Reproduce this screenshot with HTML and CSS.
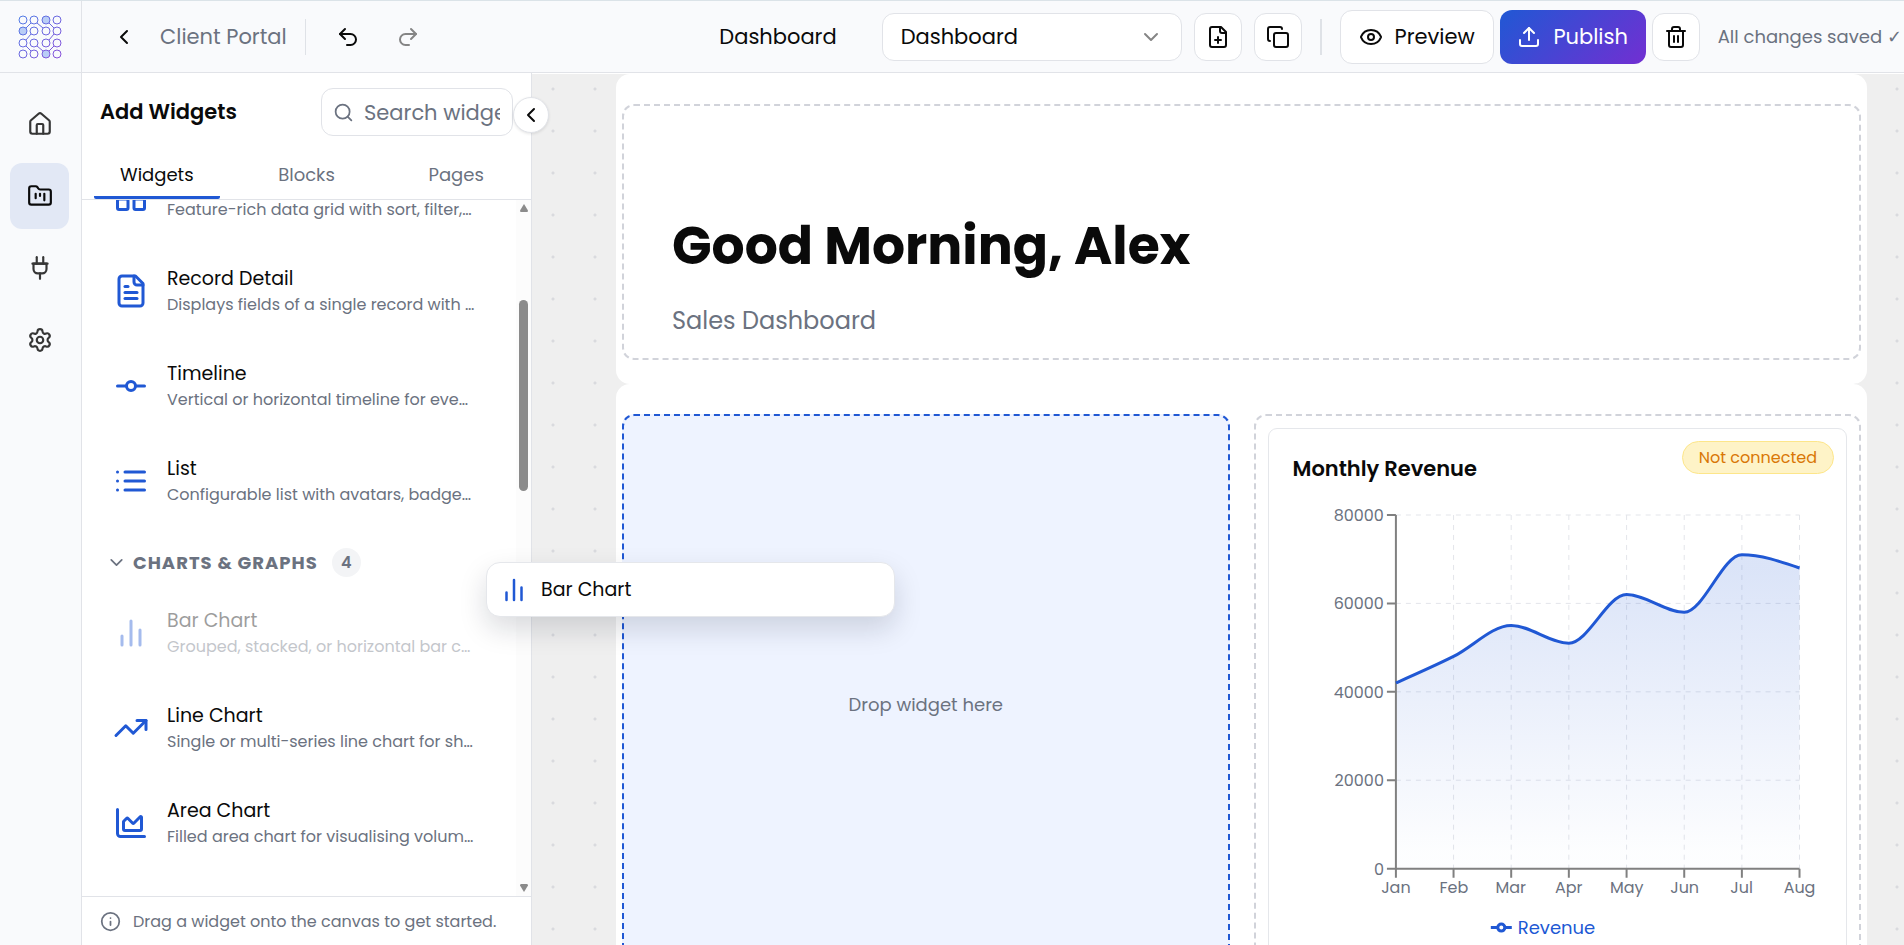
FILE: index.html
```html
<!DOCTYPE html>
<html lang="en">
<head>
<meta charset="utf-8">
<title>Client Portal – Dashboard</title>
<link rel="stylesheet" href="styles.css">
</head>
<body>
<svg class="sprite" aria-hidden="true">
  <defs>
    <symbol id="i-left" viewBox="0 0 24 24"><path d="m15 18-6-6 6-6"/></symbol>
    <symbol id="i-down" viewBox="0 0 24 24"><path d="m6 9 6 6 6-6"/></symbol>
    <symbol id="i-undo" viewBox="0 0 24 24"><path d="M9 14 4 9l5-5"/><path d="M4 9h10.5a5.5 5.5 0 0 1 0 11H11"/></symbol>
    <symbol id="i-redo" viewBox="0 0 24 24"><path d="m15 14 5-5-5-5"/><path d="M20 9H9.5a5.5 5.5 0 0 0 0 11H13"/></symbol>
    <symbol id="i-search" viewBox="0 0 24 24"><circle cx="11" cy="11" r="8"/><path d="m21 21-4.3-4.3"/></symbol>
    <symbol id="i-home" viewBox="0 0 24 24"><path d="M15 21v-8a1 1 0 0 0-1-1h-4a1 1 0 0 0-1 1v8"/><path d="M3 10a2 2 0 0 1 .7-1.5l7-6a2 2 0 0 1 2.6 0l7 6A2 2 0 0 1 21 10v9a2 2 0 0 1-2 2H5a2 2 0 0 1-2-2z"/></symbol>
    <symbol id="i-folder" viewBox="0 0 24 24"><path d="M4 20h16a2 2 0 0 0 2-2V8a2 2 0 0 0-2-2h-7.9a2 2 0 0 1-1.7-.9l-.8-1.2A2 2 0 0 0 7.9 3H4a2 2 0 0 0-2 2v13c0 1.100.9 2 2 2Z"/><path d="M8 10v4"/><path d="M12 10v2"/><path d="M16 10v6"/></symbol>
    <symbol id="i-plug" viewBox="0 0 24 24"><path d="M12 22v-5"/><path d="M9 8V2"/><path d="M15 8V2"/><path d="M18 8v5a4 4 0 0 1-4 4h-4a4 4 0 0 1-4-4V8Z"/><path d="M5 8h14"/></symbol>
    <symbol id="i-gear" viewBox="0 0 24 24"><path d="M9.671 4.136a2.340 2.340 0 0 1 4.659 0 2.340 2.340 0 0 0 3.319 1.915 2.340 2.340 0 0 1 2.330 4.033 2.340 2.340 0 0 0 0 3.831 2.340 2.340 0 0 1-2.330 4.033 2.340 2.340 0 0 0-3.319 1.915 2.340 2.340 0 0 1-4.659 0 2.340 2.340 0 0 0-3.320-1.915 2.340 2.340 0 0 1-2.330-4.033 2.340 2.340 0 0 0 0-3.831A2.340 2.340 0 0 1 6.350 6.051a2.340 2.340 0 0 0 3.319-1.915"/><circle cx="12" cy="12" r="3"/></symbol>
    <symbol id="i-fileplus" viewBox="0 0 24 24"><path d="M15 2H6a2 2 0 0 0-2 2v16a2 2 0 0 0 2 2h12a2 2 0 0 0 2-2V7Z"/><path d="M14 2v4a2 2 0 0 0 2 2h4"/><path d="M9 15h6"/><path d="M12 18v-6"/></symbol>
    <symbol id="i-copy" viewBox="0 0 24 24"><rect x="8" y="8" width="14" height="14" rx="2"/><path d="M4 16c-1.100 0-2-.9-2-2V4c0-1.100.9-2 2-2h10c1.100 0 2 .9 2 2"/></symbol>
    <symbol id="i-eye" viewBox="0 0 24 24"><path d="M2.062 12.348a1 1 0 0 1 0-.696 10.750 10.750 0 0 1 19.876 0 1 1 0 0 1 0 .696 10.750 10.750 0 0 1-19.876 0"/><circle cx="12" cy="12" r="3"/></symbol>
    <symbol id="i-upload" viewBox="0 0 24 24"><path d="M21 15v4a2 2 0 0 1-2 2H5a2 2 0 0 1-2-2v-4"/><path d="m17 8-5-5-5 5"/><path d="M12 3v12"/></symbol>
    <symbol id="i-trash" viewBox="0 0 24 24"><path d="M3 6h18"/><path d="M19 6v14a2 2 0 0 1-2 2H7a2 2 0 0 1-2-2V6"/><path d="M8 6V4a2 2 0 0 1 2-2h4a2 2 0 0 1 2 2v2"/><path d="M10 11v6"/><path d="M14 11v6"/></symbol>
    <symbol id="i-grid" viewBox="0 0 24 24"><rect x="3" y="3" width="7" height="7" rx="1"/><rect x="14" y="3" width="7" height="7" rx="1"/><rect x="14" y="14" width="7" height="7" rx="1"/><rect x="3" y="14" width="7" height="7" rx="1"/></symbol>
    <symbol id="i-doc" viewBox="0 0 24 24"><path d="M15 2H6a2 2 0 0 0-2 2v16a2 2 0 0 0 2 2h12a2 2 0 0 0 2-2V7Z"/><path d="M14 2v4a2 2 0 0 0 2 2h4"/><path d="M10 9H8"/><path d="M16 13H8"/><path d="M16 17H8"/></symbol>
    <symbol id="i-commit" viewBox="0 0 24 24"><circle cx="12" cy="12" r="3"/><path d="M3 12h6"/><path d="M15 12h6"/></symbol>
    <symbol id="i-list" viewBox="0 0 24 24"><path d="M3 6h.01M3 12h.01M3 18h.01M8 6h13M8 12h13M8 18h13"/></symbol>
    <symbol id="i-bars" viewBox="0 0 24 24"><path d="M6 20v-6M12 20V4M18 20V10"/></symbol>
    <symbol id="i-trend" viewBox="0 0 24 24"><path d="M16 7h6v6"/><path d="m22 7-8.500 8.500-5-5L2 17"/></symbol>
    <symbol id="i-area" viewBox="0 0 24 24"><path d="M3 3v16a2 2 0 0 0 2 2h16"/><path d="M7 11.207a.5.5 0 0 1 .146-.353l2-2a.5.5 0 0 1 .708 0l3.292 3.292a.5.5 0 0 0 .708 0l4.292-4.292a.5.5 0 0 1 .854.353V16a1 1 0 0 1-1 1H8a1 1 0 0 1-1-1z"/></symbol>
    <symbol id="i-info" viewBox="0 0 24 24"><circle cx="12" cy="12" r="10"/><path d="M12 16v-4M12 8h.01"/></symbol>
  </defs>
</svg>

<div class="app">
  <nav class="rail" aria-label="Main">
    <a class="logo" href="#" aria-label="Home page">
      <svg viewBox="0 0 44 44">
        <defs><linearGradient id="lg" gradientUnits="userSpaceOnUse" x1="0" y1="0" x2="44" y2="44"><stop offset="0" stop-color="#4f7fe6"/><stop offset="1" stop-color="#8b4fd8"/></linearGradient></defs>
        <g fill="none" stroke="url(#lg)">
          <path d="M8 13 13 8M19 8l6 5M31 8l5 5M8 25l5-6M36 19l-5 6M8 31l5 5M19 31l6 5M31 36l5-5"/>
          <circle cx="5" cy="5" r="4"/><circle cx="16" cy="5" r="4"/><circle class="dot" cx="28" cy="5" r="4"/><circle cx="39" cy="5" r="4"/>
          <circle class="dot" cx="5" cy="16" r="4"/><circle cx="16" cy="16" r="4"/><circle cx="28" cy="16" r="4"/><circle cx="39" cy="16" r="4"/>
          <circle cx="5" cy="28" r="4"/><circle cx="16" cy="28" r="4"/><circle cx="28" cy="28" r="4"/><circle cx="39" cy="28" r="4"/>
          <circle cx="5" cy="39" r="4"/><circle cx="16" cy="39" r="4"/><circle class="dot" cx="28" cy="39" r="4"/><circle cx="39" cy="39" r="4"/>
        </g>
      </svg>
    </a>
    <div class="rail-items">
      <a class="rail-item" href="#" aria-label="Home"><svg class="icon"><use href="#i-home"/></svg></a>
      <a class="rail-item active" href="#" aria-label="Projects"><svg class="icon"><use href="#i-folder"/></svg></a>
      <a class="rail-item" href="#" aria-label="Integrations"><svg class="icon"><use href="#i-plug"/></svg></a>
      <a class="rail-item" href="#" aria-label="Settings"><svg class="icon"><use href="#i-gear"/></svg></a>
    </div>
  </nav>

  <header class="topbar">
    <div class="group">
      <button class="ghost" aria-label="Back"><svg class="icon"><use href="#i-left"/></svg></button>
      <span class="project">Client Portal</span>
      <span class="divider"></span>
      <div class="history">
        <button class="ghost" aria-label="Undo"><svg class="icon"><use href="#i-undo"/></svg></button>
        <button class="ghost" aria-label="Redo" disabled><svg class="icon"><use href="#i-redo"/></svg></button>
      </div>
    </div>
    <div class="group actions">
      <label class="page-label" for="page">Dashboard</label>
      <div class="select-wrap">
        <select id="page"><option>Dashboard</option></select>
        <svg class="icon"><use href="#i-down"/></svg>
      </div>
      <button class="square" aria-label="Add page"><svg class="icon"><use href="#i-fileplus"/></svg></button>
      <button class="square" aria-label="Duplicate page"><svg class="icon"><use href="#i-copy"/></svg></button>
      <span class="divider thick"></span>
      <div class="cluster">
        <button class="big"><svg class="icon"><use href="#i-eye"/></svg>Preview</button>
        <button class="big publish"><svg class="icon"><use href="#i-upload"/></svg>Publish</button>
        <button class="square" aria-label="Delete"><svg class="icon"><use href="#i-trash"/></svg></button>
      </div>
      <span class="saved">All changes saved ✓</span>
    </div>
  </header>

  <aside class="panel">
    <div class="panel-head">
      <h2>Add Widgets</h2>
      <div class="search">
        <svg class="icon"><use href="#i-search"/></svg>
        <input type="text" placeholder="Search widgets" aria-label="Search widgets">
      </div>
    </div>
    <button class="collapse" aria-label="Collapse panel"><svg class="icon"><use href="#i-left"/></svg></button>
    <div class="tabs" role="tablist">
      <button role="tab" aria-selected="true">Widgets</button>
      <button role="tab" aria-selected="false">Blocks</button>
      <button role="tab" aria-selected="false">Pages</button>
    </div>
    <div class="scroller">
      <div class="widgets">
        <div class="widget"><svg class="icon"><use href="#i-grid"/></svg><div><h3>Data Table</h3><p>Feature-rich data grid with sort, filter,…</p></div></div>
        <div class="widget"><svg class="icon"><use href="#i-doc"/></svg><div><h3>Record Detail</h3><p>Displays fields of a single record with …</p></div></div>
        <div class="widget"><svg class="icon"><use href="#i-commit"/></svg><div><h3>Timeline</h3><p>Vertical or horizontal timeline for eve…</p></div></div>
        <div class="widget"><svg class="icon"><use href="#i-list"/></svg><div><h3>List</h3><p>Configurable list with avatars, badge…</p></div></div>
        <button class="section" aria-expanded="true"><svg class="icon"><use href="#i-down"/></svg>CHARTS &amp; GRAPHS<span class="count">4</span></button>
        <div class="widget dragging"><svg class="icon"><use href="#i-bars"/></svg><div><h3>Bar Chart</h3><p>Grouped, stacked, or horizontal bar c…</p></div></div>
        <div class="widget"><svg class="icon"><use href="#i-trend"/></svg><div><h3>Line Chart</h3><p>Single or multi-series line chart for sh…</p></div></div>
        <div class="widget"><svg class="icon"><use href="#i-area"/></svg><div><h3>Area Chart</h3><p>Filled area chart for visualising volum…</p></div></div>
      </div>
      <div class="scrollbar" aria-hidden="true">
        <svg viewBox="0 0 10 8"><path d="M5 0 9 6.500Q9 8 8 8H2Q1 8 1 6.500Z"/></svg>
        <span class="thumb"></span>
        <svg viewBox="0 0 10 8"><path d="M5 8 9 1.500Q9 0 8 0H2Q1 0 1 1.500Z"/></svg>
      </div>
    </div>
    <p class="hint"><svg class="icon"><use href="#i-info"/></svg>Drag a widget onto the canvas to get started.</p>
  </aside>

  <main class="canvas">
    <section class="sheet">
      <div class="zone hero">
        <h1>Good Morning, Alex</h1>
        <p>Sales Dashboard</p>
      </div>
    </section>
    <section class="sheet columns">
      <div class="zone drop">Drop widget here</div>
      <div class="zone holder">
        <article class="card">
          <span class="badge">Not connected</span>
          <h2>Monthly Revenue</h2>
          <svg class="chart" viewBox="0 0 530 445" role="img" aria-label="Monthly revenue, January to August">
            <defs><linearGradient id="fill" x1="0" y1="0" x2="0" y2="1"><stop offset="0.05" stop-color="#2058d4" stop-opacity="0.16"/><stop offset="0.95" stop-color="#2058d4" stop-opacity="0.01"/></linearGradient></defs>
            <path class="gridline" d="M103 15H507M103 103.500H507M103 192H507M103 280.500H507M160.700 15V369M218.400 15V369M276.100 15V369M333.900 15V369M391.600 15V369M449.300 15V369M507 15V369"/>
            <path fill="url(#fill)" d="M103 183.150C122.200 174.670 141.500 166.190 160.700 156.600C180 147.010 199.200 125.630 218.400 125.630C237.600 125.630 256.900 143.330 276.100 143.330C295.400 143.330 314.600 94.650 333.900 94.650C353.100 94.650 372.400 112.350 391.600 112.350C410.800 112.350 430.100 54.830 449.300 54.830C468.500 54.830 487.800 61.460 507 68.100V369H103Z"/>
            <path class="axis" d="M103 15V369H507M94 15H103M94 103.500H103M94 192H103M94 280.500H103M94 369H103M103 369v9M160.700 369v9M218.400 369v9M276.100 369v9M333.900 369v9M391.600 369v9M449.300 369v9M507 369v9"/>
            <path class="line" d="M103 183.150C122.200 174.670 141.500 166.190 160.700 156.600C180 147.010 199.200 125.630 218.400 125.630C237.600 125.630 256.900 143.330 276.100 143.330C295.400 143.330 314.600 94.650 333.900 94.650C353.100 94.650 372.400 112.350 391.600 112.350C410.800 112.350 430.100 54.830 449.300 54.830C468.500 54.830 487.800 61.460 507 68.100"/>
            <g class="ylabels"><text x="91" y="21">80000</text><text x="91" y="109">60000</text><text x="91" y="198">40000</text><text x="91" y="286">20000</text><text x="91" y="375">0</text></g>
            <g class="xlabels"><text x="103" y="393">Jan</text><text x="161" y="393">Feb</text><text x="218" y="393">Mar</text><text x="276" y="393">Apr</text><text x="334" y="393">May</text><text x="392" y="393">Jun</text><text x="449" y="393">Jul</text><text x="507" y="393">Aug</text></g>
            <g class="legend"><path d="M198 428h7M212 428h7"/><circle cx="208.500" cy="428" r="3.500"/><text x="225" y="434">Revenue</text></g>
          </svg>
        </article>
      </div>
    </section>
  </main>

  <div class="ghost-card"><svg class="icon"><use href="#i-bars"/></svg>Bar Chart</div>
</div>
</body>
</html>
```
FILE: styles.css
```css
* { box-sizing: border-box; }
body, h1, h2, h3, p { margin: 0; }
body { font-family: Poppins, Inter, "Open Sans", sans-serif; font-size: 21px; color: #0a0a0a; background: #fff; overflow: hidden; }
button, input, select { font: inherit; color: inherit; }
button { cursor: pointer; padding: 0; border: 0; background: none; }
.sprite { position: absolute; width: 0; height: 0; }
.icon { width: 24px; height: 24px; flex: none; fill: none; stroke: currentColor; stroke-width: 2; stroke-linecap: round; stroke-linejoin: round; }

.app { display: grid; grid-template: 73px 1fr / 82px 450px 1fr; height: 100vh; border-top: 1px solid #dbe3e8; position: relative; }

.rail { grid-row: 1 / 3; background: #f9fafc; border-right: 1px solid #e1e3e8; display: flex; flex-direction: column; }
.logo { height: 72px; border-bottom: 1px solid #e1e3e8; display: flex; align-items: center; padding-left: 18px; }
.logo svg { width: 44px; height: 44px; }
.logo .dot { fill: #b9cdf6; }
.rail-items { padding: 18px 12px 0 10px; display: flex; flex-direction: column; gap: 6px; }
.rail-item { height: 66px; border-radius: 12px; display: flex; align-items: center; justify-content: center; color: #363636; }
.rail-item .icon { width: 26px; height: 26px; }
.rail-item.active { background: #e2e8f5; color: #0a0a0a; }

.topbar { grid-column: 2 / 4; height: 72px; background: #f9fafc; border-bottom: 1px solid #e1e3e8; display: flex; align-items: center; justify-content: space-between; padding: 0 2px 0 18px; }
.group { display: flex; align-items: center; }
.ghost { width: 48px; height: 48px; display: grid; place-items: center; }
.ghost:disabled { color: #858585; }
.history { display: flex; gap: 12px; margin-left: 18px; }
.project { color: #6b7280; margin: 0 18px 0 12px; min-width: 127px; }
.divider { width: 1px; height: 36px; background: #dfe2e7; }
.divider.thick { width: 2px; margin: 0 6px; }
.actions { gap: 12px; }
.page-label { min-width: 117px; margin-right: 33px; }
.select-wrap { position: relative; width: 300px; }
.select-wrap select { appearance: none; width: 100%; height: 48px; padding: 0 18px; border: 1px solid #e1e3e8; border-radius: 12px; background: #fff; }
.select-wrap .icon { position: absolute; right: 19px; top: 12px; color: #858585; pointer-events: none; }
.square { width: 48px; height: 48px; border: 1px solid #e1e3e8; border-radius: 12px; background: #fff; display: grid; place-items: center; }
.cluster { display: flex; align-items: center; gap: 6px; }
.big { width: 154px; height: 54px; border: 1px solid #e1e3e8; border-radius: 12px; background: #fff; display: flex; align-items: center; justify-content: center; gap: 12px; }
.publish { width: 146px; border: 0; color: #fff; background: linear-gradient(135deg, #2058d4, #722fd2); }
.saved { font-family: Poppins, "DejaVu Sans", sans-serif; font-size: 18px; color: #6b7280; min-width: 182px; margin-left: 6px; white-space: nowrap; }

.panel { position: relative; border-right: 1px solid #e1e3e8; background: #fff; display: flex; flex-direction: column; min-height: 0; margin-top: -1px; }
.panel-head { display: flex; align-items: center; justify-content: space-between; padding: 15px 18px 12px; }
.panel-head h2 { font-size: 21px; font-weight: 600; line-height: 48px; }
.search { width: 192px; height: 48px; border: 1px solid #e1e3e8; border-radius: 12px; display: flex; align-items: center; gap: 10px; padding: 0 12px 0 11px; color: #6b7280; }
.search .icon { width: 21px; height: 21px; }
.search input { width: 100%; min-width: 0; border: 0; padding: 0; outline: 0; background: none; }
.search input::placeholder { color: #6b7280; opacity: 1; }
.collapse { position: absolute; z-index: 2; top: 24px; right: -18px; width: 36px; height: 36px; border: 1px solid #e1e3e8; border-radius: 50%; background: #fff; display: grid; place-items: center; box-shadow: 0 1px 3px #0000001a; }
.tabs { display: grid; grid-template-columns: repeat(3, 1fr); border-bottom: 1px solid #e1e3e8; }
.tabs button { height: 51px; margin: 0 12px; padding-top: 4px; font-size: 18px; color: #6b7280; border-bottom: 3px solid transparent; border-radius: 2px; }
.tabs [aria-selected="true"] { color: #0a0a0a; border-color: #2058d4; }

.scroller { flex: 1; min-height: 0; overflow: hidden; display: flex; }
.widgets { flex: 1; min-width: 0; margin-top: -52px; padding: 0 18px; }
.widget { height: 95px; display: flex; align-items: center; gap: 18px; padding-left: 13px; white-space: nowrap; }
.widget .icon { width: 36px; height: 36px; color: #2058d4; }
.widget h3 { padding-top: 2px; font-size: 19px; font-weight: 400; line-height: 26px; }
.widget p { font-size: 16px; line-height: 26px; color: #6b7280; }
.widget.dragging { opacity: 0.4; }
.section { height: 57px; padding: 12px 0 0 6px; display: flex; align-items: center; gap: 6px; font-size: 18px; font-weight: 700; letter-spacing: 1px; color: #6b7280; }
.section .icon { width: 21px; height: 21px; }
.count { min-width: 29px; height: 29px; margin-left: 8px; border-radius: 15px; background: #f3f4f6; display: grid; place-items: center; font-size: 16px; font-weight: 600; letter-spacing: 0; }
.scrollbar { width: 15px; background: #fcfcfc; display: flex; flex-direction: column; align-items: center; padding: 4px 0; }
.scrollbar svg { width: 10px; height: 8px; fill: #8b8b8b; }
.thumb { width: 9px; height: 191px; margin: 88px 0 auto; border-radius: 5px; background: #8b8b8b; }
.hint { height: 49px; border-top: 1px solid #e1e3e8; display: flex; align-items: center; gap: 12px; padding-left: 18px; font-size: 16px; color: #6b7280; white-space: nowrap; }
.hint .icon { width: 21px; height: 21px; }

.canvas { min-width: 0; overflow: hidden; padding: 0 37px 0 84px; background: radial-gradient(circle, #d9dade 1px, transparent 2px) 0 -6px / 42px 42px #efefef; }
.sheet { background: #fff; border-radius: 14px; padding: 30px 6px 24px; }
.zone { border: 2px dashed #d1d3da; border-radius: 12px; }
.hero { padding: 104px 48px 19px; }
.hero h1 { font-size: 52px; font-weight: 700; line-height: 72px; }
.hero p { font-size: 24px; line-height: 36px; margin-top: 21px; color: #6b7280; }
.columns { display: grid; grid-template-columns: 1fr 1fr; gap: 24px; min-height: 700px; }
.drop { border-color: #2058d4; background: #eef3ff; height: 580px; display: grid; place-items: center; font-size: 18px; color: #6b7280; }
.holder { height: 580px; padding: 12px; }
.card { position: relative; height: 100%; border: 1px solid #e5e7eb; border-radius: 9px; padding: 24px; }
.card h2 { font-size: 21px; font-weight: 600; line-height: 32px; }
.badge { position: absolute; top: 12px; right: 12px; height: 33px; padding: 0 16px; border: 1px solid #fde68a; border-radius: 17px; background: #fef3c7; color: #d97706; font-size: 16px; line-height: 31px; }
.chart { display: block; width: 100%; height: auto; margin-top: 15px; font-size: 16px; }
.gridline { fill: none; stroke: #e3e5ea; stroke-dasharray: 5 5; }
.axis { fill: none; stroke: #808080; stroke-width: 2; }
.line { fill: none; stroke: #2058d4; stroke-width: 3; }
.ylabels { fill: #6b7280; text-anchor: end; }
.xlabels { fill: #6b7280; text-anchor: middle; }
.legend path, .legend circle { fill: none; stroke: #2058d4; stroke-width: 3; }
.legend text { fill: #2058d4; font-size: 18px; }

.ghost-card { position: absolute; z-index: 5; left: 486px; top: 561px; width: 409px; height: 55px; padding: 0 12px; border: 1px solid #e5e7eb; border-radius: 14px; background: #fff; display: flex; align-items: center; gap: 12px; font-size: 19px; box-shadow: 0 12px 28px #0f172a26; }
.ghost-card .icon { width: 30px; height: 30px; color: #2058d4; }
```
